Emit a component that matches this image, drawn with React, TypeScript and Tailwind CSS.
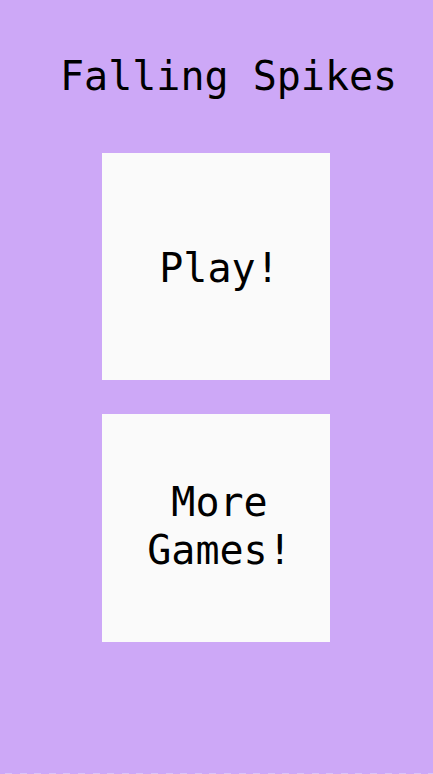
const MenuButton = ({ lines, h, pad }: { lines: string[]; h: string; pad: string }) => (
  <div className={`w-[228px] ${h} ${pad} bg-[#fafafa] flex items-center justify-center pl-[7px]`}>
    <div className="text-center text-[40px] leading-[48px] text-black">
      {lines.map((line, i) => (
        <div key={i}>{line}</div>
      ))}
    </div>
  </div>
)

export default function App() {
  return (
    <div
      className="w-[433px] h-[774px] bg-[#cda8f7] flex flex-col overflow-hidden"
      style={{ fontFamily: '"DejaVu Sans Mono", monospace' }}
    >
      {/* Title */}
      <div className="mt-[51px] pl-[60px] text-[40px] leading-[50px] text-black">Falling Spikes</div>

      {/* Menu */}
      <div className="mt-[52px] pr-[1px] flex flex-col items-center gap-[34px]">
        <MenuButton lines={['Play!']} h="h-[227px]" pad="pt-[3px]" />
        <MenuButton lines={['More', 'Games!']} h="h-[228px]" pad="pb-[4px]" />
      </div>

      {/* bottom dashed edge */}
      <div className="mt-auto h-[1px] w-full bg-[repeating-linear-gradient(90deg,transparent_0_5px,#dcc4f9_5px_12px,transparent_12px_14.6px)]" />
    </div>
  )
}
